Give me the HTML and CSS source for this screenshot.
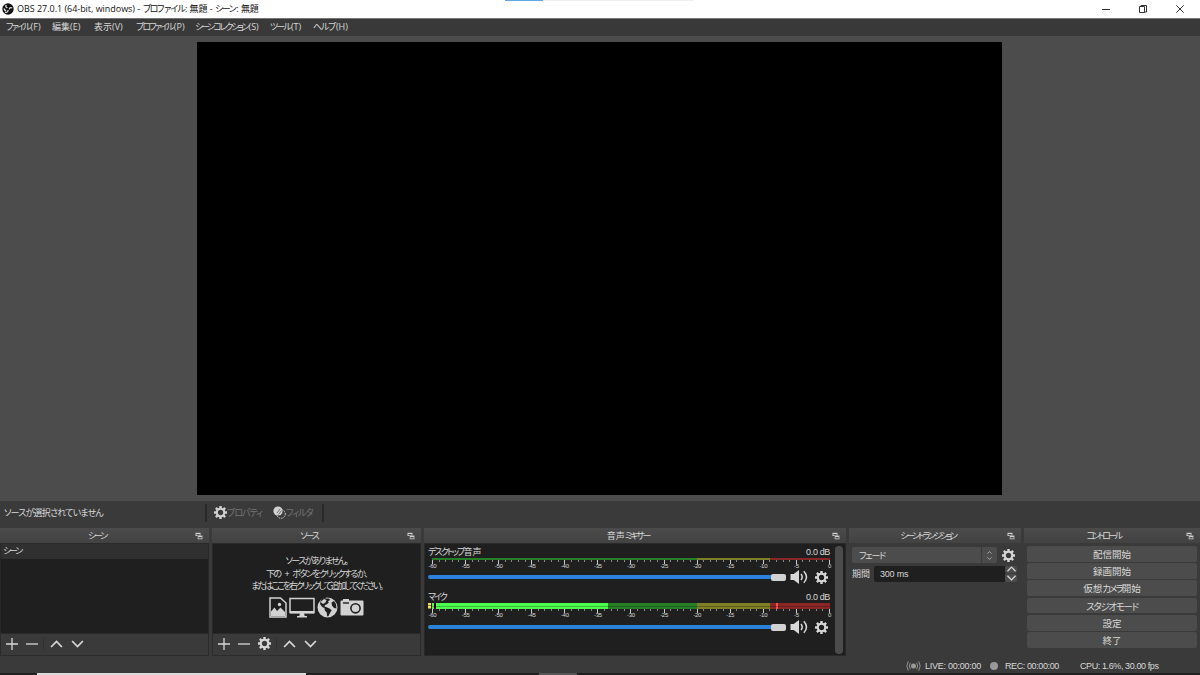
FILE: index.html
```html
<!DOCTYPE html>
<html lang="ja">
<head>
<meta charset="utf-8">
<title>OBS 27.0.1</title>
<link rel="stylesheet" href="styles.css">
</head>
<body>
<svg class="defs" width="0" height="0">
  <symbol id="gear" viewBox="0 0 16 16"><path fill="none" stroke="currentColor" stroke-width="2.6" d="M8 3.400a4.600 4.600 0 1 0 0 9.200a4.600 4.600 0 0 0 0-9.200z"/><path stroke="currentColor" stroke-width="3" d="M8 0v3M8 13v3M0 8h3M13 8h3M2.300 2.300l2 2M11.700 11.700l2 2M13.700 2.300l-2 2M4.300 11.700l-2 2"/></symbol>
  <symbol id="float" viewBox="0 0 8 8"><path fill="#d2d2d2" d="M.5 .8h5v3.200h-5z"/><path fill="#333" d="M1.300 2.200h3.400v.9H1.300z"/><path fill="#d2d2d2" stroke="#444" stroke-width=".4" d="M2.600 3.400h5v4h-5z"/><path fill="#333" d="M3.500 5.200h3.200v1.200h-3.200z"/></symbol>
  <symbol id="plus" viewBox="0 0 12 12"><path fill="none" stroke="currentColor" stroke-width="1.3" d="M6 0v12M0 6h12"/></symbol>
  <symbol id="minus" viewBox="0 0 12 12"><path fill="none" stroke="currentColor" stroke-width="1.3" d="M0 6h12"/></symbol>
  <symbol id="up" viewBox="0 0 12 8"><path fill="none" stroke="currentColor" stroke-width="1.7" d="M.6 7L6 1.5L11.4 7"/></symbol>
  <symbol id="down" viewBox="0 0 12 8"><path fill="none" stroke="currentColor" stroke-width="1.7" d="M.6 1L6 6.5L11.4 1"/></symbol>
  <symbol id="speaker" viewBox="0 0 18 14"><path fill="currentColor" d="M.5 4h3.200L9 0v14L3.700 10H.5z"/><path fill="none" stroke="currentColor" stroke-width="1.500" d="M11 4q2.400 3 0 6M13.800 1.300q5.400 5.700 0 11.400"/></symbol>
</svg>

<header class="titlebar">
  <svg class="logo" viewBox="0 0 12 12"><circle cx="6" cy="6" r="5.700" fill="#111"/><path fill="none" stroke="#ddd" stroke-width="1.300" d="M4.300 1.800q-1.500 2.200 1.300 3.200M10.300 5q-2.700-1-3.400 1.500M3 9.200q3 .8 3.100-2.200M2 5.500q.4 2 2.200 2.200"/><circle cx="6" cy="6" r="1" fill="#111"/></svg>
  <span class="title">OBS 27.0.1 (64-bit, windows) - <span class="t-kana">プロファイル</span>: 無題 - <span class="t-kana">シーン</span>: 無題</span>
  <div class="progress"></div>
  <div class="winbtns">
    <svg viewBox="0 0 10 10"><path stroke="#333" d="M1 5.500h8"/></svg>
    <svg viewBox="0 0 10 10"><path fill="none" stroke="#333" d="M1.500 2.500h5v6h-5zM3 2.500v-1h5.500v6.500h-2"/></svg>
    <svg viewBox="0 0 10 10"><path stroke="#333" d="M1.300 1.300l7.400 7.400M8.700 1.300l-7.400 7.400"/></svg>
  </div>
</header>

<nav class="menubar">
  <span class="m1"><i>ファイル</i>(F)</span>
  <span class="m2">編集(E)</span>
  <span class="m3">表示(V)</span>
  <span class="m4"><i>プロファイル</i>(P)</span>
  <span class="m5"><i>シーンコレクション</i>(S)</span>
  <span class="m6"><i>ツール</i>(T)</span>
  <span class="m7"><i>ヘルプ</i>(H)</span>
</nav>

<main class="preview"><div class="canvas"></div></main>

<div class="context">
  <span class="nosrc">ソースが選択されていません</span>
  <b class="vsep"></b>
  <svg class="cgear"><use href="#gear"/></svg><span class="dim prop">プロパティ</span>
  <svg class="cfilter" viewBox="0 0 13 13"><circle cx="5" cy="5" r="4.600" fill="#d2d2d2"/><circle cx="8" cy="8" r="4.300" fill="none" stroke="#d2d2d2" stroke-width="1" stroke-dasharray="1.500 1"/><path stroke="#555" stroke-width=".8" d="M4 7l3-4M5.500 8.500l3-4M7.500 10l2.500-3"/></svg><span class="dim filt">フィルタ</span>
  <b class="vsep last"></b>
</div>

<section class="docks">
  <div class="dock scenes">
    <h2><span class="h-scene">シーン</span><svg><use href="#float"/></svg></h2>
    <div class="list"><div class="row">シーン</div></div>
    <div class="tools">
      <svg class="sq"><use href="#plus"/></svg><svg class="sq"><use href="#minus"/></svg><b></b><svg class="ch"><use href="#up"/></svg><svg class="ch"><use href="#down"/></svg>
    </div>
  </div>

  <div class="dock sources">
    <h2><span class="h-src">ソース</span><svg><use href="#float"/></svg></h2>
    <div class="list empty">
      <p class="e1">ソースがありません。</p>
      <p class="e2">下の + ボタンをクリックするか、</p>
      <p class="e3">またはここを右クリックして追加してください。</p>
      <div class="kinds">
        <svg width="18" height="21" viewBox="0 0 18 21"><path fill="none" stroke="#d2d2d2" stroke-width="1.500" d="M1 1h10.500l5.500 5v14H1z"/><path fill="#d2d2d2" d="M2 18v-3.500l3.500-4L8 14l3.500-3.500L16 15v4H2z"/><circle cx="10.500" cy="7.500" r="1.700" fill="#d2d2d2"/></svg>
        <svg width="26" height="21" viewBox="0 0 26 21"><path fill="none" stroke="#d2d2d2" stroke-width="1.500" d="M1 1.500h24v14H1z"/><path fill="#d2d2d2" d="M1 14h24v2.500H1zM11 16h4l.7 3h2.300v1.500H8V19h2.300z"/></svg>
        <svg width="21" height="21" viewBox="0 0 21 21"><circle cx="10.500" cy="10.500" r="10" fill="#d2d2d2"/><path fill="#1f1f1f" d="M9.500 1.500l2.500 0 1 1.500-2 1.200.8 1.300-2.300 2-1.500 .5-.5 1.500 2 .8 3 1.300 2.200 1.700-1.700 2.700-1.500 3-1.300.5-.5-4-1.800-2-.4-2.200-2.500-1.500-2-2.800 .6-3 2-2.500 1.500-.5z"/><path fill="#d2d2d2" d="M3.500 5l3.500-3 2.500 1-1 2.500-2.500 1.500z"/><path fill="#1f1f1f" d="M14.500 5.500l2.500-1.500 2 3 .5 4.500-2.500-.5-2-2.500z"/></svg>
        <svg width="24" height="19" viewBox="0 0 24 19"><path fill="#d2d2d2" d="M1.500 2.500H3V1h6v1.500h13.500q1 0 1 1v13q0 1-1 1h-21q-1 0-1-1v-13q0-1 1-1z"/><path stroke="#1f1f1f" stroke-width="1.400" d="M3 5h6"/><circle cx="15.500" cy="10.300" r="4.600" fill="none" stroke="#1f1f1f" stroke-width="1.600"/></svg>
      </div>
    </div>
    <div class="tools">
      <svg class="sq"><use href="#plus"/></svg><svg class="sq"><use href="#minus"/></svg><svg class="tg"><use href="#gear"/></svg><b></b><svg class="ch"><use href="#up"/></svg><svg class="ch"><use href="#down"/></svg>
    </div>
  </div>

  <div class="dock mixer">
    <h2><span class="h-mix">音声<i>ミキサー</i></span><svg><use href="#float"/></svg></h2>
    <div class="mixbody">
      <div class="channels">
        <div class="channel">
          <div class="name"><span class="n1"><i>デスクトップ</i>音声</span><span class="db">0.0 dB</span></div>
          <div class="meter"></div>
          <div class="ticks"></div>
          <div class="scale"><s>-60</s><s>-55</s><s>-50</s><s>-45</s><s>-40</s><s>-35</s><s>-30</s><s>-25</s><s>-20</s><s>-15</s><s>-10</s><s>-5</s><s>0</s></div>
          <div class="ctl"><div class="slider"><div class="handle"></div></div><svg class="spk"><use href="#speaker"/></svg><svg class="g"><use href="#gear"/></svg></div>
        </div>
        <div class="channel mic">
          <div class="name"><span class="n2">マイク</span><span class="db">0.0 dB</span></div>
          <div class="live"><div class="input"></div><div class="bars"><div class="level"></div><div class="level split"></div><div class="level"></div></div></div>
          <div class="ticks"></div>
          <div class="scale"><s>-60</s><s>-55</s><s>-50</s><s>-45</s><s>-40</s><s>-35</s><s>-30</s><s>-25</s><s>-20</s><s>-15</s><s>-10</s><s>-5</s><s>0</s></div>
          <div class="ctl"><div class="slider"><div class="handle"></div></div><svg class="spk"><use href="#speaker"/></svg><svg class="g"><use href="#gear"/></svg></div>
        </div>
      </div>
      <div class="scroll"></div>
    </div>
  </div>

  <div class="dock trans">
    <h2><span class="h-tr">シーントランジション</span><svg><use href="#float"/></svg></h2>
    <div class="trow">
      <div class="combo"><span>フェード</span><div class="arrows"><svg><use href="#up"/></svg><svg><use href="#down"/></svg></div></div>
      <svg class="g"><use href="#gear"/></svg>
    </div>
    <div class="trow second">
      <span class="dur">期間</span>
      <div class="spin"><span>300 ms</span></div>
      <div class="spinbtn"><div><svg><use href="#up"/></svg></div><div><svg><use href="#down"/></svg></div></div>
    </div>
  </div>

  <div class="dock controls">
    <h2><span class="h-ctl">コントロール</span><svg><use href="#float"/></svg></h2>
    <div class="buttons">
      <button>配信開始</button>
      <button>録画開始</button>
      <button>仮想<i class="k1">カメラ</i>開始</button>
      <button><i class="k2">スタジオモード</i></button>
      <button>設定</button>
      <button>終了</button>
    </div>
  </div>
</section>

<footer class="status">
  <svg class="ant" viewBox="0 0 16 12"><circle cx="8" cy="6" r="2.700" fill="#999"/><path fill="none" stroke="#999" d="M4.600 2.500q-2 3.500 0 7M2.400 1q-3 5 0 10M11.400 2.500q2 3.500 0 7M13.600 1q3 5 0 10"/></svg>
  <span class="s1">LIVE: 00:00:00</span>
  <div class="dot"></div>
  <span class="s2">REC: 00:00:00</span>
  <span class="s3">CPU: 1.6%, 30.00 fps</span>
</footer>
<div class="edge"><div class="e-light"></div><div class="e-gray"></div></div>
</body>
</html>
```
FILE: styles.css
```css
* { box-sizing: border-box; }
body { margin: 0; width: 1200px; height: 675px; overflow: hidden; display: flex; flex-direction: column; background: #3a3a3a; color: #d8d8d8; font: 9px "Liberation Sans", "Noto Sans CJK JP", sans-serif; white-space: nowrap; font-feature-settings: "palt"; }
i { font-style: normal; }
s { text-decoration: none; }
svg { display: block; flex: none; }
.defs { position: absolute; }

.titlebar { height: 19px; flex: none; background: #fff; border-bottom: 1px solid #777; display: flex; align-items: center; position: relative; color: #111; padding-left: 2px; }
.logo { width: 12px; height: 12px; }
.title { margin-left: 3px; font: 9px/18px "Open Sans", "Noto Sans CJK JP", sans-serif; letter-spacing: -.03px; }
.t-kana { letter-spacing: -2.100px; margin-right: 1px; }
.progress { position: absolute; left: 505px; top: 0; width: 189px; height: 1px; background: linear-gradient(90deg, #62a8e5 38px, #eee 38px); }
.winbtns { margin-left: auto; display: flex; gap: 27px; padding-right: 15px; }
.winbtns svg { width: 10px; height: 10px; }

.menubar { height: 17px; flex: none; display: flex; line-height: 16px; font-family: "Open Sans", "Noto Sans CJK JP", sans-serif; background: #393939; padding-left: 6px; }
.menubar i { letter-spacing: -1.900px; margin-right: 1px; }
.m1 { width: 46px; } .m2, .m3 { width: 42px; } .m4 { width: 59px; } .m5 { width: 75px; } .m6 { width: 43px; }
.menubar .m5 i { letter-spacing: -2.200px; }
.menubar .m7 i { letter-spacing: -1.300px; }

.preview { height: 465px; flex: none; background: #4c4c4c; padding: 6px 0 0 197px; }
.canvas { width: 805px; height: 453px; background: #000; }

.context { height: 27px; flex: none; display: flex; align-items: center; padding: 0 0 4px 4px; }
.nosrc { width: 201px; letter-spacing: -.8px; }
.vsep { width: 2px; height: 18px; background: #292929; }
.cgear { width: 13px; height: 13px; margin-left: 7px; color: #d2d2d2; }
.dim { color: #757575; }
.prop { width: 46px; letter-spacing: -1px; }
.cfilter { width: 13px; height: 13px; }
.filt { width: 36px; letter-spacing: -1px; }

.docks { height: 128px; flex: none; display: flex; gap: 3px; }
.dock { display: flex; flex-direction: column; }
.scenes, .sources { width: 209px; }
.mixer { width: 422px; }
.trans { width: 172px; }
.controls { width: 176px; }
h2 { margin: 0; font-weight: normal; font-size: 9px; height: 15px; flex: none; display: flex; align-items: center; background: linear-gradient(#4b4b4b, #424242); padding-right: 6px; }
h2 span { flex: 1; text-align: center; line-height: 15px; padding-top: 1px; }
h2 svg { width: 8px; height: 8px; }
.h-scene, .h-src { letter-spacing: -2.300px; padding-right: 1px; }
.h-mix i { letter-spacing: -2.200px; }
.h-tr { letter-spacing: -2.400px; }
.h-ctl { letter-spacing: -2.600px; padding-right: 3px; }
.list { height: 91px; background: #1f1f1f; border: 1px solid #292929; }
.row { height: 15px; background: #303030; line-height: 15px; padding-left: 2px; letter-spacing: -2.300px; }
.tools { height: 22px; display: flex; align-items: center; gap: 8px; padding: 0 0 2px 5px; border: 1px solid #2b2b2b; border-top: 0; }
.tools b { width: 1px; height: 14px; background: #303030; margin: 0 -2px 0 -3px; }
.sq { width: 12px; height: 12px; }
.tg { width: 13px; height: 13px; }
.ch { width: 13px; height: 8px; }
.empty { text-align: center; padding-top: 11px; }
.empty p { margin: 0; line-height: 12.500px; }
.e1 { letter-spacing: -1.700px; } .e2 { letter-spacing: -1.500px; word-spacing: 3px; } .e3 { letter-spacing: -2px; }
.kinds { display: flex; justify-content: center; align-items: center; gap: 2px; margin-top: 4px; }

.mixbody { height: 113px; background: #1f1f1f; border: 1px solid #292929; display: flex; }
.channels { width: 402px; margin-left: 3px; }
.channel { height: 45px; padding-top: 2px; }
.mic { height: 52px; }
.name { height: 12px; line-height: 12px; display: flex; justify-content: space-between; }
.n1 i { letter-spacing: -1.900px; } .n2 { letter-spacing: -2px; }
.db { letter-spacing: -.35px; }
.meter { height: 2px; margin-left: 4px; background: linear-gradient(90deg, #267f26 265px, #7f7f26 265px 338px, #8a2626 338px); }
.ticks { height: 4px; margin-left: 4px; background: repeating-linear-gradient(90deg, #ccc 0 1px, transparent 1px 33.080px) 0 0 / 100% 4px no-repeat, repeating-linear-gradient(90deg, #888 0 1px, transparent 1px 6.616px) 0 0 / 100% 2px no-repeat; }
.scale { display: flex; justify-content: space-between; margin-left: 4px; height: 5px; font-size: 6px; line-height: 4px; letter-spacing: -.3px; }
.scale s { width: 1px; display: flex; justify-content: center; }
.ctl { height: 14px; margin-top: 1px; display: flex; align-items: center; }
.mic .ctl { margin-top: 2px; }
.slider { width: 358px; height: 4px; border-radius: 2px; background: #2a82da; display: flex; align-items: center; justify-content: flex-end; }
.handle { width: 15px; height: 7px; border-radius: 2px; background: #d2d2d2; }
.spk { width: 18px; height: 14px; margin-left: 4px; }
.ctl .g { width: 13px; height: 13px; margin-left: 7px; }
.live { height: 6px; display: flex; gap: 1px; }
.input { width: 3px; background: repeating-linear-gradient(#f4e34a 0 2px, #8c8330 2px 3px); }
.bars { flex: 1; display: flex; flex-direction: column; }
.level { height: 2px; flex: 1 0 auto; background: linear-gradient(90deg, #4cff4c 2px, #000 2px 4px, #4cff4c 4px 176px, #267f26 176px 265px, #7f7f26 265px 338px, #8a2626 338px 344px, #ff4c4c 344px 346px, #8a2626 346px); }
.split { height: 1px; flex: none; filter: brightness(.75); }
.scroll { width: 8px; height: 108px; margin: 2px 0 0 5px; border-radius: 4px; background: #4c4c4c; }

.trow { display: flex; align-items: center; padding-left: 3px; margin-top: 4px; height: 16px; }
.combo { width: 145px; height: 16px; background: #4c4c4c; border-radius: 2px; display: flex; align-items: center; padding-left: 7px; letter-spacing: -1.200px; }
.arrows { margin-left: auto; width: 16px; height: 16px; border-left: 1px solid #3a3a3a; display: flex; flex-direction: column; align-items: center; justify-content: center; gap: 3px; }
.arrows svg { width: 5px; height: 3px; }
.trow .g { width: 13px; height: 13px; margin-left: 5px; }
.second { margin-top: 2px; height: 17px; }
.dur { width: 22px; }
.spin { width: 131px; height: 16px; line-height: 16px; background: #1f1f1f; padding-left: 6px; border-radius: 2px 0 0 2px; letter-spacing: -.2px; }
.spinbtn { width: 12px; display: flex; flex-direction: column; gap: 1px; }
.spinbtn div { height: 7.500px; background: #4c4c4c; border-radius: 2px; display: flex; align-items: center; justify-content: center; }
.spinbtn svg { width: 9px; height: 6px; }
.buttons { padding: 3px 3px 0; display: flex; flex-direction: column; gap: 1.400px; }
button { height: 15.800px; border: 0; border-radius: 2px; background: #4c4c4c; color: inherit; font: inherit; font-size: 9.500px; font-feature-settings: inherit; padding: 1px 0 0; line-height: 15px; }
.k1 { letter-spacing: -2px; } .k2 { letter-spacing: -1.300px; }

.status { height: 17px; flex: none; display: flex; align-items: center; padding: 3px 0 0 906px; }
.ant { width: 15px; height: 12px; }
.s1 { width: 65px; margin-left: 4px; letter-spacing: -.25px; }
.dot { width: 8px; height: 8px; border-radius: 50%; background: #999; }
.s2 { width: 75px; margin-left: 7px; letter-spacing: -.4px; }
.s3 { letter-spacing: -.4px; }
.edge { height: 2px; flex: none; margin-top: auto; background: #202020; display: flex; padding-left: 37px; }
.e-light { width: 269px; background: #ddd; }
.e-gray { width: 38px; margin-left: 233px; background: #555; }
```
